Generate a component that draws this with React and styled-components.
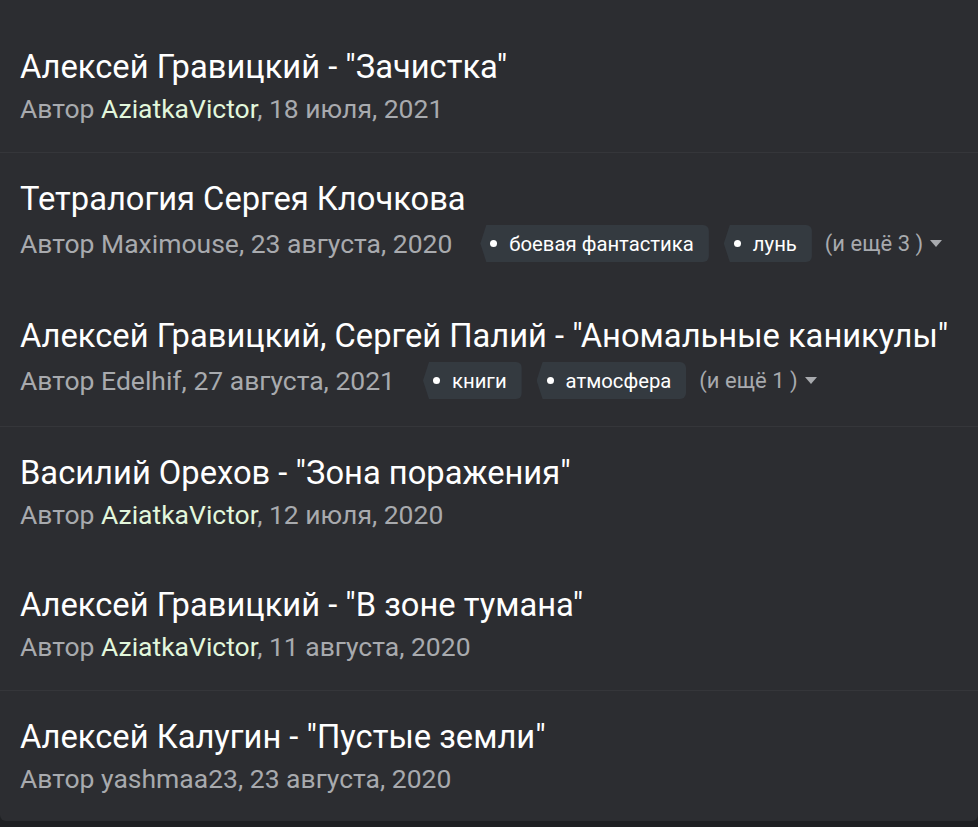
import React from "react";
import styled, { createGlobalStyle } from "styled-components";

const GlobalStyle = createGlobalStyle`
  html, body {
    margin: 0;
    padding: 0;
    background: #1f2023;
    font-family: Roboto, "Noto Sans", "Liberation Sans", sans-serif;
  }
`;

const topics = [
  {
    title: 'Алексей Гравицкий - "Зачистка"',
    author: "AziatkaVictor",
    highlight: true,
    date: "18 июля, 2021",
    divider: true,
  },
  {
    title: "Тетралогия Сергея Клочкова",
    author: "Maximouse",
    date: "23 августа, 2020",
    tags: ["боевая фантастика", "лунь"],
    more: 3,
  },
  {
    title: 'Алексей Гравицкий, Сергей Палий - "Аномальные каникулы"',
    author: "Edelhif",
    date: "27 августа, 2021",
    tags: ["книги", "атмосфера"],
    more: 1,
    divider: true,
  },
  {
    title: 'Василий Орехов - "Зона поражения"',
    author: "AziatkaVictor",
    highlight: true,
    date: "12 июля, 2020",
  },
  {
    title: 'Алексей Гравицкий - "В зоне тумана"',
    author: "AziatkaVictor",
    highlight: true,
    date: "11 августа, 2020",
    divider: true,
  },
  {
    title: 'Алексей Калугин - "Пустые земли"',
    author: "yashmaa23",
    date: "23 августа, 2020",
  },
];

const App = () => {
  return (
    <>
      <GlobalStyle />
      <Panel>
        {topics.map((t, i) => (
          <Row key={i} $divider={t.divider}>
            <Title>{t.title}</Title>
            <Meta>
              <Byline>
                Автор <Author $highlight={t.highlight}>{t.author}</Author>,{" "}
                {t.date}
              </Byline>
              {t.tags && (
                <Tags>
                  {t.tags.map((tag) => (
                    <Tag key={tag}>
                      <Dot />
                      {tag}
                    </Tag>
                  ))}
                  <More>
                    (и ещё {t.more} )
                    <Caret viewBox="0 0 12 7">
                      <path d="M0 0h12L6 7z" fill="currentColor" />
                    </Caret>
                  </More>
                </Tags>
              )}
            </Meta>
          </Row>
        ))}
      </Panel>
    </>
  );
};

export default App;

const Panel = styled.div`
  background: #2c2d31;
  padding-top: 21px;
  border-radius: 0 0 6px 6px;
  margin-bottom: 5px;
`;

const Row = styled.div`
  padding: 26px 20px 27px;
  border-bottom: 1px solid ${(p) => (p.$divider ? "#35363a" : "transparent")};
  &:last-child {
    border-bottom: none;
    padding-bottom: 26px;
  }
`;

const Title = styled.div`
  color: #ffffff;
  font-size: 32.7px;
  line-height: 40px;
  white-space: nowrap;
`;

const Meta = styled.div`
  display: flex;
  align-items: center;
  margin-top: 6px;
  min-height: 32px;
`;

const Byline = styled.span`
  color: #a8aaae;
  font-size: 26.5px;
  line-height: 32px;
  white-space: nowrap;
`;

const Author = styled.span`
  color: ${(p) => (p.$highlight ? "#e2f7dc" : "#a8aaae")};
`;

const Tags = styled.div`
  display: flex;
  align-items: center;
  gap: 15px;
  margin-left: 28px;
`;

const Tag = styled.span`
  display: inline-flex;
  align-items: center;
  height: 37px;
  padding: 0 15px 0 10px;
  background: #343a40;
  color: #ffffff;
  font-size: 20.3px;
  border-radius: 6px;
  clip-path: polygon(6px 0, 100% 0, 100% 100%, 6px 100%, 0 50%);
  white-space: nowrap;
`;

const Dot = styled.span`
  width: 7px;
  height: 7px;
  border-radius: 50%;
  background: #ffffff;
  margin-right: 12px;
`;

const More = styled.span`
  display: inline-flex;
  align-items: center;
  gap: 7px;
  margin-left: -2px;
  color: #a8aaae;
  font-size: 22px;
  white-space: nowrap;
`;

const Caret = styled.svg`
  width: 12px;
  height: 7px;
`;
